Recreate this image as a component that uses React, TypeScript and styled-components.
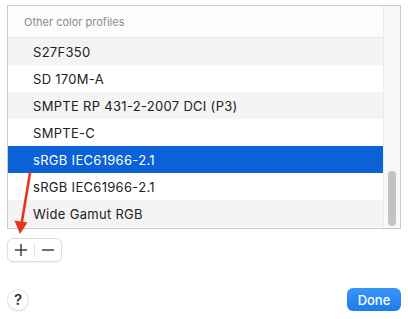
import React from "react"
import styled, { createGlobalStyle } from "styled-components"

const GlobalStyle = createGlobalStyle`
    html, body {
        margin: 0;
        padding: 0;
        background: #ffffff;
    }
    body {
        font-family: Inter, "Liberation Sans", sans-serif;
        -webkit-font-smoothing: antialiased;
    }
`

const Page = styled.div`
    position: relative;
    width: 408px;
    height: 319px;
    padding: 5px 7px 0 7px;
    box-sizing: border-box;
    display: flex;
    flex-direction: column;
`

const ListBox = styled.div`
    display: flex;
    width: 394px;
    height: 224px;
    box-sizing: border-box;
    border: 1px solid #c9c9c9;
    background: #ffffff;
`

const ListBody = styled.div`
    flex: 1;
    display: flex;
    flex-direction: column;
`

const Header = styled.div`
    height: 31px;
    display: flex;
    align-items: center;
    padding-left: 16px;
    font-size: 11px;
    color: #8c8c8c;
    background: #fcfcfc;
    border-bottom: 1px solid #e6e6e6;
`

const Row = styled.div<{ $alt: boolean; $selected: boolean }>`
    height: 27px;
    display: flex;
    align-items: center;
    padding-left: 25px;
    font-size: 13px;
    letter-spacing: 0.3px;
    color: ${p => (p.$selected ? "#ffffff" : "#222222")};
    background: ${p => (p.$selected ? "#0b61d8" : p.$alt ? "#f4f4f4" : "#ffffff")};
`

const ScrollTrack = styled.div`
    width: 17px;
    box-sizing: border-box;
    border-left: 1px solid #ebebeb;
    background: #f8f8f8;
    display: flex;
    flex-direction: column;
    justify-content: flex-end;
    align-items: center;
    padding-bottom: 2px;
`

const ScrollThumb = styled.div`
    width: 8px;
    height: 55px;
    border-radius: 4px;
    background: #c3c3c3;
`

const ButtonGroup = styled.div`
    margin-top: 9px;
    width: 55px;
    height: 24px;
    box-sizing: border-box;
    display: flex;
    align-items: center;
    border: 1px solid #dedede;
    border-radius: 6px;
    background: #ffffff;
    box-shadow: 0 1px 1px rgba(0, 0, 0, 0.05);
`

const GroupButton = styled.div`
    flex: 1;
    height: 100%;
    display: flex;
    align-items: center;
    justify-content: center;
`

const Divider = styled.div`
    width: 1px;
    height: 14px;
    background: #e0e0e0;
`

const Footer = styled.div`
    margin-top: 26px;
    display: flex;
    align-items: center;
    justify-content: space-between;
`

const HelpButton = styled.div`
    width: 22px;
    height: 22px;
    border-radius: 50%;
    box-sizing: border-box;
    border: 1px solid #e2e2e2;
    background: #ffffff;
    box-shadow: 0 1px 1px rgba(0, 0, 0, 0.06);
    display: flex;
    align-items: center;
    justify-content: center;
    font-size: 15px;
    font-weight: 600;
    color: #333333;
`

const DoneButton = styled.div`
    width: 54px;
    height: 23px;
    border-radius: 6px;
    background: linear-gradient(#3a95f8, #1c7bf0);
    color: #ffffff;
    font-size: 13px;
    font-weight: 500;
    display: flex;
    align-items: center;
    justify-content: center;
`

const ArrowOverlay = styled.svg`
    position: absolute;
    left: 0;
    top: 0;
    pointer-events: none;
`

const profiles = [
    "S27F350",
    "SD 170M-A",
    "SMPTE RP 431-2-2007 DCI (P3)",
    "SMPTE-C",
    "sRGB IEC61966-2.1",
    "sRGB IEC61966-2.1",
    "Wide Gamut RGB",
]
const selectedIndex = 4

const Stroke = ({ minus }: { minus?: boolean }) => (
    <svg width="14" height="14" viewBox="0 0 14 14">
        <line x1="1" y1="7" x2="13" y2="7" stroke="#333" strokeWidth="1.4" />
        {!minus && <line x1="7" y1="1" x2="7" y2="13" stroke="#333" strokeWidth="1.4" />}
    </svg>
)

export default function App() {
    return (
        <Page>
            <GlobalStyle />
            <ListBox>
                <ListBody>
                    <Header>Other color profiles</Header>
                    {profiles.map((name, i) => (
                        <Row key={i} $alt={i % 2 === 0} $selected={i === selectedIndex}>
                            {name}
                        </Row>
                    ))}
                </ListBody>
                <ScrollTrack>
                    <ScrollThumb />
                </ScrollTrack>
            </ListBox>
            <ButtonGroup>
                <GroupButton><Stroke /></GroupButton>
                <Divider />
                <GroupButton><Stroke minus /></GroupButton>
            </ButtonGroup>
            <Footer>
                <HelpButton>?</HelpButton>
                <DoneButton>Done</DoneButton>
            </Footer>
            <ArrowOverlay width="408" height="319">
                <line x1="30" y1="173" x2="21.5" y2="224" stroke="#e8331f" strokeWidth="2.6" strokeLinecap="round" />
                <polygon points="14.5,220.5 27.5,222.5 20,234" fill="#e8331f" />
            </ArrowOverlay>
        </Page>
    )
}
